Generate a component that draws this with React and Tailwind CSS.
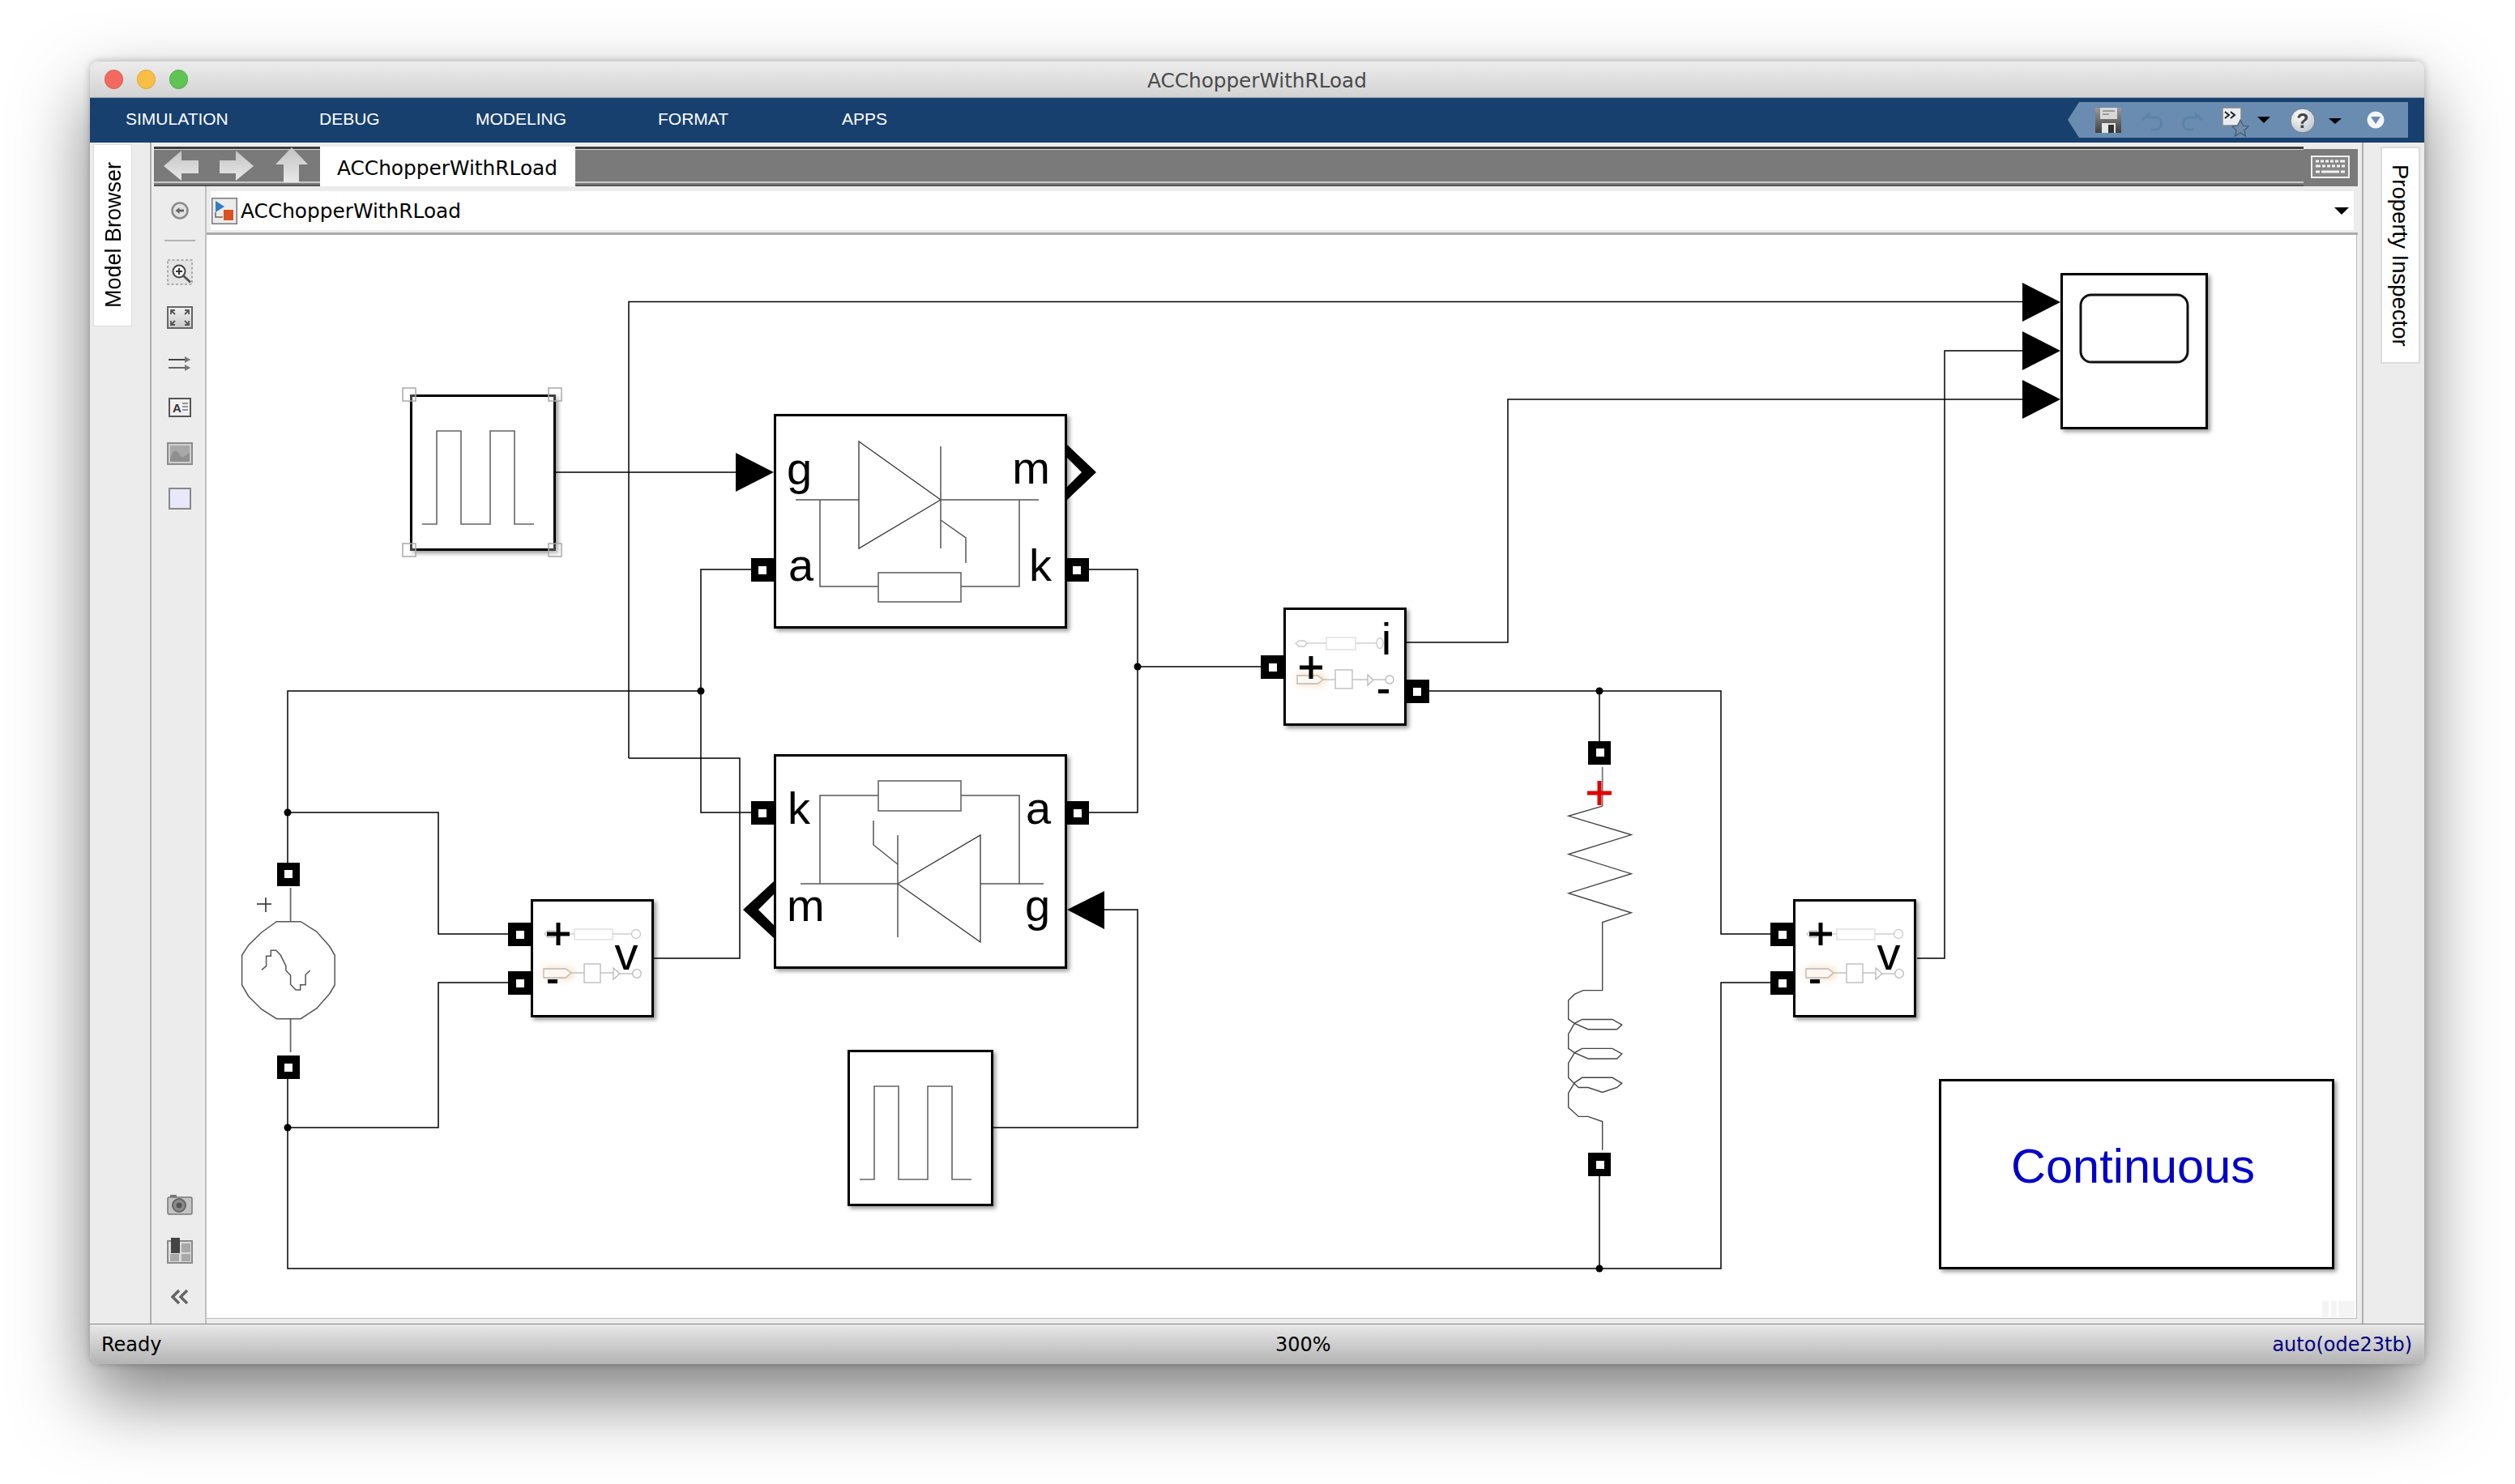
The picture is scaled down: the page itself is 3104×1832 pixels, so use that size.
import React from "react";

const pts = (arr, ox, oy, sx, sy) => arr.map(([x, y]) => `${(ox + x / sx).toFixed(1)},${(oy + y / sy).toFixed(1)}`).join(" ");

const Wire = ({ p }) => <polyline points={p} fill="none" stroke="#000" strokeWidth="1.5" />;
const Ink = ({ p, w = 1.5, c = "#555" }) => <polyline points={p} fill="none" stroke={c} strokeWidth={w} strokeLinejoin="miter" />;
const Dot = ({ x, y }) => <circle cx={x} cy={y} r="4.5" fill="#000" />;
const Port = ({ x, y, wx, wy }) => (
  <g>
    <rect x={x} y={y} width="28" height="29" fill="#000" />
    <rect x={wx} y={wy} width="10" height="10" fill="#fff" />
  </g>
);
const Arrow = ({ tx, y }) => <polygon points={`${tx - 47},${y - 24} ${tx},${y} ${tx - 47},${y + 24}`} fill="#000" />;
const Label = ({ x, y, t, a = "start", s = 56, c = "#000" }) => (
  <text x={x} y={y} textAnchor={a} fontSize={s} fill={c} fontFamily="'Liberation Sans', Arial, sans-serif">{t}</text>
);
const Pulse = ({ dx = 0, dy = 0 }) => (
  <g transform={`translate(${dx} ${dy})`}>
    <Ink p="521,647 539,647 539,532 569,532 569,647 605,647 605,532 635,532 635,647 659,647" w={1.6} c="#666" />
  </g>
);
const Handle = ({ x, y }) => <rect x={x - 8} y={y - 8} width="16" height="16" fill="#fff" fillOpacity="0.25" stroke="#a8a8a8" strokeWidth="1.5" />;
const Plus = ({ x, y, h = 14, c = "#000", t = 5 }) => (
  <g fill={c}>
    <rect x={x - h} y={y - t / 2} width={h * 2} height={t} />
    <rect x={x - t / 2} y={y - h} width={t} height={h * 2} />
  </g>
);
const VInner = () => (
  <g>
    <g fill="none" stroke="#c8c8c8" strokeWidth="1.3">
      <line x1="684" y1="1153" x2="709" y2="1153" />
      <polygon points="672,1153 676,1149 684,1149 684,1157 676,1157" />
      <rect x="709" y="1147" width="47" height="13" stroke="#ddd" />
      <line x1="756" y1="1153" x2="779" y2="1153" />
      <circle cx="785" cy="1153" r="5.5" />
    </g>
    <rect x="670" y="1194" width="38" height="15" rx="6" fill="#f6c493" opacity="0.55" className="blur-[4px]" />
    <g fill="none" stroke="#b8b8b8" strokeWidth="1.3">
      <polygon points="671,1196 698,1196 705,1201 698,1207 671,1207" fill="#fff" fillOpacity="0.7" />
      <line x1="705" y1="1201" x2="721" y2="1201" />
      <rect x="721" y="1190" width="20" height="23" />
      <line x1="741" y1="1201" x2="757" y2="1201" />
      <polygon points="757,1195 765,1202 757,1209" />
      <line x1="765" y1="1202" x2="781" y2="1202" />
      <circle cx="786" cy="1202" r="5.3" />
    </g>
    <Plus x={689} y={1153} />
    <rect x="676" y="1209" width="12" height="5" fill="#000" />
    <Label x={773} y={1197} t="v" a="middle" s={58} />
  </g>
);

const Wires = () => (
  <g>
    <Wire p="776,936 776,372.5 2496,372.5" />
    <Wire p="776,936 913,936 913,1183 807,1183" />
    <Wire p="686,583 908,583" />
    <Wire p="927,703 865,703 865,1003 927,1003" />
    <Wire p="355,1065 355,853 865,853" />
    <Wire p="1344,703 1404,703 1404,1003 1344,1003" />
    <Wire p="1404,823 1556,823" />
    <Wire p="1363,1123 1404,1123 1404,1392 1226,1392" />
    <Wire p="1736,793 1861,793 1861,493 2496,493" />
    <Wire p="2366,1183 2400,1183 2400,433 2496,433" />
    <Wire p="1764,853 2124,853 2124,1153 2186,1153" />
    <Wire p="1974,853 1974,916" />
    <Wire p="1974,1451 1974,1566" />
    <Wire p="2186,1213 2124,1213 2124,1566 355,1566 355,1332" />
    <Wire p="355,1003 541,1003 541,1153 627,1153" />
    <Wire p="355,1392 541,1392 541,1213 627,1213" />
    <Dot x={865} y={853} />
    <Dot x={1404} y={823} />
    <Dot x={355} y={1003} />
    <Dot x={355} y={1392} />
    <Dot x={1974} y={853} />
    <Dot x={1974} y={1566} />
  </g>
);

const Diagram = () => (
  <svg className="absolute inset-0" width="2654" height="1338" viewBox="255 290 2654 1338">
    <Wires />
    <Pulse />
    <Pulse dx={540} dy={809} />
    <Handle x={505} y={487} />
    <Handle x={685} y={487} />
    <Handle x={505} y={679} />
    <Handle x={685} y={679} />

    {/* upper thyristor */}
    <Arrow tx={955} y={583} />
    <polygon points="1316,548 1353,583 1316,618 1316,602 1335,583 1316,564" fill="#000" />
    <Port x={927} y={689} wx={936} wy={699} />
    <Port x={1316} y={689} wx={1324} wy={699} />
    <Label x={971} y={598} t="g" />
    <Label x={1296} y={597} t="m" a="end" />
    <Label x={973} y={717} t="a" />
    <Label x={1270} y={717} t="k" />
    <Ink p="982,617 1060,617" />
    <Ink p="1161,617 1282,617" />
    <Ink p="1012,617 1012,724 1084,724" />
    <Ink p="1186,724 1258,724 1258,617" />
    <rect x="1084" y="707" width="102" height="36" fill="#fff" stroke="#666" strokeWidth="1.6" />
    <Ink p="1161,617 1060,545 1060,677 1161,617" w={1.3} c="#333" />
    <Ink p="1161,551 1161,677" />
    <Ink p="1161,642 1192,664 1192,695" />

    {/* lower thyristor */}
    <polygon points="1317,1123 1363,1100 1363,1147" fill="#000" />
    <polygon points="955,1088 917,1123 955,1158 955,1142 936,1123 955,1104" fill="#000" />
    <Port x={927} y={989} wx={936} wy={999} />
    <Port x={1316} y={989} wx={1325} wy={999} />
    <Label x={972} y={1017} t="k" />
    <Label x={1266} y={1017} t="a" />
    <Label x={971} y={1137} t="m" />
    <Label x={1265} y={1137} t="g" />
    <Ink p="1084,982 1012,982 1012,1091" />
    <Ink p="1186,982 1258,982 1258,1091" />
    <Ink p="988,1091 1108,1091" />
    <Ink p="1210,1091 1288,1091" />
    <rect x="1084" y="964" width="102" height="37" fill="#fff" stroke="#666" strokeWidth="1.6" />
    <Ink p="1108,1091 1210,1031 1210,1163 1108,1091" w={1.3} c="#333" />
    <Ink p="1108,1031 1108,1157" />
    <Ink p="1078,1013 1078,1043 1108,1067" />

    {/* AC source */}
    <Port x={342} y={1065} wx={351} wy={1074} />
    <Port x={342} y={1303} wx={351} wy={1313} />
    <Ink p="358.6,1096 358.6,1137" w={1.8} c="#666" />
    <Ink p="358.6,1258 358.6,1299" w={1.8} c="#666" />
    <polygon
      points={pts([[172, 293], [255, 293], [310, 330], [355, 385], [373, 418], [373, 528], [355, 560], [310, 615], [255, 653], [172, 653], [120, 618], [75, 570], [52, 528], [52, 418], [75, 380], [120, 333]], 280, 1040, 2.8, 3)}
      fill="none" stroke="#555" strokeWidth="1.5"
    />
    <Ink p={pts([[120, 472], [136, 458], [136, 421], [152, 421], [152, 400], [170, 400], [186, 418], [204, 458], [204, 474], [220, 492], [220, 526], [238, 546], [254, 546], [254, 527], [272, 527], [272, 490], [288, 474]], 280, 1040, 2.8, 3)} />
    <Ink p="317,1116 335,1116" c="#333" w={1.6} />
    <Ink p="328,1108 328,1126" c="#333" w={1.6} />

    {/* voltage measurements */}
    <Port x={627} y={1139} wx={637} wy={1149} />
    <Port x={627} y={1199} wx={637} wy={1209} />
    <VInner />
    <Port x={2185} y={1139} wx={2195} wy={1149} />
    <Port x={2185} y={1199} wx={2195} wy={1209} />
    <g transform="translate(1558 0)">
      <VInner />
    </g>

    {/* current measurement */}
    <Port x={1556} y={809} wx={1566} wy={819} />
    <Port x={1736} y={839} wx={1744} wy={849} />
    <g fill="none" stroke="#c8c8c8" strokeWidth="1.3">
      <polygon points="1599,794 1603,791 1610,791 1613,794 1610,798 1603,798" />
      <line x1="1613" y1="794" x2="1637" y2="794" />
      <rect x="1637" y="787" width="36" height="15" stroke="#ddd" />
      <line x1="1673" y1="794" x2="1699" y2="794" />
      <ellipse cx="1703" cy="794" rx="4" ry="6.5" />
    </g>
    <rect x="1600" y="832" width="36" height="14" rx="6" fill="#f6c493" opacity="0.55" className="blur-[4px]" />
    <g fill="none" stroke="#b8b8b8" strokeWidth="1.3">
      <polygon points="1601,834 1626,834 1633,839 1626,844 1601,844" fill="#fff" fillOpacity="0.7" />
      <line x1="1633" y1="839" x2="1648" y2="839" />
      <rect x="1648" y="827" width="21" height="23" />
      <line x1="1669" y1="839" x2="1688" y2="839" />
      <polygon points="1688,833 1695,839.5 1688,846" />
      <line x1="1695" y1="839" x2="1710" y2="839" />
      <circle cx="1715" cy="839" r="5" />
    </g>
    <Plus x={1618} y={824} />
    <rect x="1701" y="851" width="13" height="5" fill="#000" />
    <Label x={1711} y={808} t="i" a="middle" />

    {/* RL load */}
    <Port x={1960} y={915} wx={1970} wy={924} />
    <Port x={1960} y={1423} wx={1970} wy={1433} />
    <Ink p="1977.7,947 1977.7,995" w={1.8} c="#777" />
    <Ink
      p={pts([[293, 257], [168, 290], [400, 353], [168, 418], [400, 483], [168, 548], [400, 613], [293, 645], [293, 872], [222, 872], [190, 885], [167, 905], [167, 968], [190, 982], [240, 1002], [347, 1002], [365, 987], [330, 969], [218, 969], [190, 982], [167, 1018], [167, 1066], [190, 1080], [240, 1100], [347, 1100], [365, 1084], [330, 1066], [218, 1066], [190, 1080], [167, 1115], [167, 1163], [185, 1180], [205, 1196], [240, 1196], [293, 1212], [347, 1196], [365, 1182], [330, 1163], [218, 1163], [190, 1180], [167, 1215], [167, 1262], [205, 1293], [240, 1293], [293, 1310], [293, 1405]], 1880, 900, 3, 2.703)}
      w={1.4}
      c="#444"
    />
    <Plus x={1974} y={979} h={15} c="#e00000" t={5} />

    {/* scope */}
    <Arrow tx={2543} y={373} />
    <Arrow tx={2543} y={433} />
    <Arrow tx={2543} y={493} />
    <rect x="2568" y="364" width="132" height="83" rx="13" fill="none" stroke="#111" strokeWidth="3" />

    <g fill="#f4f4f4">
      <rect x="2866" y="1606" width="8" height="20" />
      <rect x="2877" y="1606" width="7" height="20" />
      <rect x="2886" y="1606" width="20" height="20" />
    </g>
  </svg>
);

const Block = ({ className }) => (
  <div className={`absolute bg-white border-[3px] border-black shadow-[3px_3px_5px_rgba(0,0,0,0.4)] ${className}`} />
);

const ToolIcon = ({ w = 32, h, className = "", children }) => (
  <svg width={w} height={h} viewBox={`0 0 ${w} ${h}`} className={`block shrink-0 ${className}`}>{children}</svg>
);

const ToolColumn = () => (
  <div className="w-[68px] shrink-0 flex flex-col items-center pl-[3px] border-r-2 border-[#c0c0c0] bg-[#ececec]">
    <ToolIcon w={22} h={22} className="mt-[19px]">
      <circle cx="11" cy="11" r="9.5" fill="#e2e2e2" stroke="#8a8a8a" strokeWidth="2.5" />
      <path d="M5.5 11 L10.5 7 V9.5 H16 V12.5 H10.5 V15 Z" fill="#666" />
    </ToolIcon>
    <div className="mt-[25px] w-[38px] h-[2px] bg-[#b4b4b4]" />
    <ToolIcon h={32} className="mt-[22px]">
      <rect x="1" y="1" width="30" height="30" fill="#e4e4e4" stroke="#999" strokeWidth="1.5" strokeDasharray="3 2.5" />
      <circle cx="15" cy="15" r="7.5" fill="#f6f6f6" stroke="#444" strokeWidth="2" />
      <path d="M11 15h8M15 11v8" stroke="#333" strokeWidth="2" />
      <path d="M20.5 20.5 L29 28.5" stroke="#555" strokeWidth="3" />
    </ToolIcon>
    <ToolIcon h={28} className="mt-[26px]">
      <defs>
        <linearGradient id="fitg" x1="0" y1="0" x2="0" y2="1"><stop offset="0" stopColor="#f2f2f2" /><stop offset="1" stopColor="#c8c8c8" /></linearGradient>
      </defs>
      <rect x="1" y="1" width="30" height="26" fill="url(#fitg)" stroke="#666" strokeWidth="2" />
      <path d="M5 10V5h5M5 5l5 5M27 10V5h-5M27 5l-5 5M5 18v5h5M5 23l5-5M27 18v5h-5M27 23l-5-5" fill="none" stroke="#555" strokeWidth="1.8" />
    </ToolIcon>
    <ToolIcon w={30} h={18} className="mt-[34px]">
      <path d="M1 4h26" stroke="#444" strokeWidth="2" />
      <path d="M1 14h26" stroke="#666" strokeWidth="2" />
      <path d="M21 0l7 4-7 4zM21 10l7 4-7 4z" fill="#777" />
    </ToolIcon>
    <ToolIcon w={28} h={24} className="mt-[33px]">
      <rect x="1" y="1" width="26" height="22" fill="#f0f0f0" stroke="#555" strokeWidth="2" />
      <text x="5" y="18" fontSize="15" fontWeight="700" fill="#333" fontFamily="'Liberation Sans', sans-serif">A</text>
      <path d="M17 7h7M17 11h7M17 15h7" stroke="#777" strokeWidth="1.5" />
    </ToolIcon>
    <ToolIcon h={28} className="mt-[31px]">
      <rect x="1" y="1" width="30" height="26" fill="#cfcfcf" stroke="#8c8c8c" strokeWidth="2" />
      <rect x="4" y="4" width="24" height="20" fill="#a8a8a8" />
      <path d="M4 20 C8 8 12 8 16 16 C19 21 23 16 28 13 V24 H4Z" fill="#8f8f8f" />
    </ToolIcon>
    <ToolIcon w={28} h={27} className="mt-[28px]">
      <rect x="1" y="1" width="26" height="25" fill="#e8e8f8" stroke="#888" strokeWidth="2" />
    </ToolIcon>
    <ToolIcon h={25} className="mt-auto">
      <rect x="4" y="0" width="8" height="4" fill="#777" />
      <rect x="1" y="3" width="30" height="21" rx="2" fill="#c4c4c4" stroke="#777" strokeWidth="1.5" />
      <circle cx="15" cy="13" r="8" fill="#8a8a8a" stroke="#666" strokeWidth="2" />
      <circle cx="15" cy="13" r="3.5" fill="#555" />
    </ToolIcon>
    <ToolIcon h={32} className="mt-[28px]">
      <rect x="1" y="4" width="30" height="27" fill="#dcdcdc" stroke="#8a8a8a" strokeWidth="2" />
      <rect x="18" y="7" width="11" height="11" fill="#a8a8a8" />
      <rect x="18" y="20" width="11" height="9" fill="#a8a8a8" />
      <rect x="4" y="20" width="11" height="9" fill="#a8a8a8" />
      <rect x="5" y="0" width="11" height="19" fill="#444" />
    </ToolIcon>
    <ToolIcon w={22} h={18} className="mt-[32px] mb-[24px]">
      <path d="M10 1 L2 9 L10 17 M20 1 L12 9 L20 17" fill="none" stroke="#666" strokeWidth="3.5" />
    </ToolIcon>
  </div>
);

const QuickBar = () => (
  <svg width="420" height="44" viewBox="2552 126 420 44" className="block ml-auto mr-[20px] -mt-[1px]">
    <defs>
      <linearGradient id="disk" x1="0" y1="0" x2="0" y2="1"><stop offset="0" stopColor="#9a9a9a" /><stop offset="1" stopColor="#3e3e3e" /></linearGradient>
      <radialGradient id="help" cx="0.4" cy="0.3" r="0.8"><stop offset="0" stopColor="#ffffff" /><stop offset="1" stopColor="#b7c0c9" /></radialGradient>
    </defs>
    <polygon points="2552,148 2566,126 2972,126 2972,170 2566,170" fill="#6a8cb0" />
    <path d="M2586 133 h32 v31 h-32 v-26z" fill="url(#disk)" />
    <rect x="2592" y="133" width="21" height="14" fill="#d8d8d8" />
    <path d="M2595 137h15M2595 141h8" stroke="#888" strokeWidth="1.5" />
    <rect x="2594" y="152" width="17" height="12" fill="#e6e6e6" />
    <rect x="2602" y="154" width="7" height="10" fill="#333" />
    <path d="M2644 148 l8 -7 v4 h8 c10 0 10 15 0 15 h-5" fill="none" stroke="#5b83aa" strokeWidth="3" />
    <path d="M2718 148 l-8 -7 v4 h-8 c-10 0 -10 15 0 15 h5" fill="none" stroke="#5b83aa" strokeWidth="3" />
    <rect x="2743" y="133" width="23" height="22" fill="#e9edf1" stroke="#888" strokeWidth="1.5" />
    <path d="M2746 138l5 4-5 4M2753 138l5 4-5 4" fill="none" stroke="#222" strokeWidth="2" />
    <polygon points="2765,148 2768.5,155 2775,156 2770,161 2771.5,168 2765,164 2758.5,168 2760,161 2755,156 2761.5,155" fill="#6f8cab" stroke="#46586b" strokeWidth="1.2" />
    <polygon points="2786,144 2802,144 2794,152" fill="#000" />
    <circle cx="2842" cy="149" r="15" fill="url(#help)" stroke="#6a7683" strokeWidth="1" />
    <text x="2842" y="158" textAnchor="middle" fontSize="25" fontWeight="700" fill="#444" fontFamily="'Liberation Sans', sans-serif">?</text>
    <polygon points="2874,146 2890,146 2882,153" fill="#000" />
    <circle cx="2932" cy="148" r="10.5" fill="#f3f5f7" />
    <polygon points="2926,144 2938,144 2932,153" fill="#6a8cb0" />
  </svg>
);

export default function App() {
  const dejavu = "font-['DejaVu_Sans',sans-serif]";
  const lib = "font-['Liberation_Sans',Arial,sans-serif]";
  return (
    <div className="w-[3104px] h-[1832px] bg-white pl-[111px] pt-[75px] overflow-hidden">
      <div className={`w-[2881px] h-[1609px] flex flex-col rounded-[12px] overflow-hidden shadow-[0_42px_90px_rgba(0,0,0,0.5),0_0_8px_rgba(0,0,0,0.25)] ${dejavu}`}>
        {/* title bar */}
        <div className="h-[45px] shrink-0 relative flex items-center justify-center bg-gradient-to-b from-[#ececec] to-[#d3d3d3] border-t border-[#d0d0d0]">
          <div className="absolute left-[18px] top-[10px] flex gap-[17px]">
            <div className="w-[23px] h-[24px] rounded-full bg-[#f3695f] border border-[#dc5b50]" />
            <div className="w-[23px] h-[24px] rounded-full bg-[#f8bf45] border border-[#dba53a]" />
            <div className="w-[23px] h-[24px] rounded-full bg-[#5fc454] border border-[#4fab45]" />
          </div>
          <span className="text-[24.7px] text-[#4a4a4a] leading-none pt-[4px]">ACChopperWithRLoad</span>
        </div>

        {/* blue bar */}
        <div className={`h-[56px] shrink-0 flex items-center bg-[#17406f] pl-[44px] text-white text-[21px] ${lib} border-t border-[#8a9bb0]`}>
          <span className="w-[239px] -mt-[3px]">SIMULATION</span>
          <span className="w-[193px] -mt-[3px]">DEBUG</span>
          <span className="w-[225px] -mt-[3px]">MODELING</span>
          <span className="w-[227px] -mt-[3px]">FORMAT</span>
          <span className="-mt-[3px]">APPS</span>
          <QuickBar />
        </div>

        {/* main */}
        <div className="flex-1 min-h-0 flex bg-[#ececec]">
          {/* left dock */}
          <div className="w-[76px] shrink-0 pl-[4px] pt-[2px] border-r-2 border-[#b0b0b0]">
            <div className={`w-[48px] h-[225px] bg-white border border-[#dcdcdc] flex items-center justify-center pl-[2px] ${lib}`}>
              <span className="[writing-mode:vertical-rl] rotate-180 text-[27px] leading-none text-black">Model Browser</span>
            </div>
          </div>

          {/* center */}
          <div className="flex-1 min-w-0 flex flex-col pt-[5px]">
            <div className="h-[49px] shrink-0 ml-[3px] mr-[5px] flex bg-[#7a7a7a]">
              <div className="w-[205px] shrink-0 relative border-t-[3px] border-b-[2px] border-t-[#3c3c3c] border-b-[#555]">
                <div className="h-[1px] bg-[#d8d8d8]" />
                <div className="absolute left-0 right-0 bottom-[2px] h-[2px] bg-[#c8c8c8]" />
                <svg width="205" height="49" viewBox="190 181 205 49" className="absolute left-0 top-[-3px]">
                  <defs>
                    <linearGradient id="arr" x1="0" y1="0" x2="0" y2="1"><stop offset="0" stopColor="#c4c4c4" /><stop offset="1" stopColor="#e8e8e8" /></linearGradient>
                  </defs>
                  <polygon points="202,205 224,186 224,198 245,198 245,214 224,214 224,223" fill="url(#arr)" />
                  <polygon points="313,205 291,186 291,198 271,198 271,214 291,214 291,223" fill="url(#arr)" />
                  <polygon points="360,182 380,203 369,203 369,225 350,225 350,203 340,203" fill="url(#arr)" />
                </svg>
              </div>
              <div className="w-[315px] shrink-0 bg-white flex items-center pl-[21px] pt-[6px] text-[24.8px] text-black leading-none">ACChopperWithRLoad</div>
              <div className="flex-1 relative border-t-[3px] border-b-[2px] border-t-[#3c3c3c] border-b-[#555]">
                <div className="h-[1px] bg-[#d8d8d8]" />
                <div className="absolute left-0 right-0 bottom-[2px] h-[2px] bg-[#c8c8c8]" />
              </div>
              <div className="w-[67px] shrink-0 flex flex-col bg-[#7a7a7a]">
                <div className="h-[3px] bg-[#ececec]" />
                <div className="flex-1 flex items-center">
                  <svg width="48" height="28" viewBox="0 0 48 28" className="block ml-[9px] mb-[3px]">
                    <rect x="1" y="1" width="46" height="26" fill="#888" stroke="#f0f0f0" strokeWidth="2" />
                    <path d="M6 7h4M12 7h4M18 7h4M24 7h4M30 7h4M36 7h6M6 13h6M14 13h4M20 13h4M26 13h4M32 13h4M38 13h4M6 20h5M13 20h22M37 20h5" stroke="#f2f2f2" strokeWidth="3" />
                  </svg>
                </div>
              </div>
            </div>

            <div className="flex-1 min-h-0 flex">
              <ToolColumn />
              <div className="w-[2655px] shrink-0 flex flex-col">
                <div className="h-[60px] shrink-0 pt-[6px] pl-[5px] pr-[5px] border-b-[3px] border-[#ababab]">
                  <div className="h-[48px] bg-white flex items-center pl-[1px] pr-[6px] text-[24.8px] text-black leading-none">
                    <svg width="32" height="33" viewBox="0 0 32 33" className="block shrink-0">
                      <rect x="0.75" y="0.75" width="30.5" height="31.5" fill="#ececec" stroke="#777" strokeWidth="1.5" />
                      <polygon points="5,4 16,11 5,18" fill="#2f7fc4" />
                      <path d="M5 18v6h9" stroke="#666" strokeWidth="1.5" fill="none" />
                      <rect x="15" y="15" width="12" height="13" fill="#d9531e" />
                    </svg>
                    <span className="ml-[4px] pt-[3px]">ACChopperWithRLoad</span>
                    <svg width="18" height="9" viewBox="0 0 18 9" className="block ml-auto"><polygon points="0,0 18,0 9,9" fill="#000" /></svg>
                  </div>
                </div>
                <div className="relative w-[2654px] h-[1338px] bg-white border-r border-b border-[#bbb] overflow-hidden">
                  <Block className="left-[251px] top-[197px] w-[180px] h-[193px]" />
                  <Block className="left-[791px] top-[1006px] w-[180px] h-[193px]" />
                  <Block className="left-[700px] top-[221px] w-[362px] h-[265px]" />
                  <Block className="left-[700px] top-[641px] w-[362px] h-[265px]" />
                  <Block className="left-[1329px] top-[460px] w-[152px] h-[146px]" />
                  <Block className="left-[400px] top-[820px] w-[152px] h-[146px]" />
                  <Block className="left-[1958px] top-[820px] w-[152px] h-[146px]" />
                  <Block className="left-[2288px] top-[47px] w-[182px] h-[193px]" />
                  <Diagram />
                  <div className={`absolute left-[2138px] top-[1042px] w-[488px] h-[235px] bg-white border-[3px] border-black shadow-[3px_3px_5px_rgba(0,0,0,0.4)] flex items-center justify-center pr-[9px] pb-[20px] text-[59.5px] leading-none text-[#0000c8] ${lib}`}>
                    Continuous
                  </div>
                </div>
              </div>
            </div>
          </div>

          {/* right dock */}
          <div className="w-[77px] shrink-0 border-l-2 border-[#b0b0b0] pl-[21px] pt-[5px]">
            <div className={`w-[49px] h-[268px] bg-white border-2 border-[#dcdcdc] flex items-center justify-center ${lib}`}>
              <span className="[writing-mode:vertical-rl] text-[27.5px] leading-none text-black">Property Inspector</span>
            </div>
          </div>
        </div>

        {/* status bar */}
        <div className="h-[50px] shrink-0 flex items-center pl-[14px] pr-[15px] text-[24px] leading-none text-black bg-gradient-to-b from-[#e8e8e8] to-[#b4b4b4] border-t border-[#868686]">
          <span className="w-[1449px]">Ready</span>
          <span>300%</span>
          <span className="ml-auto text-[#000080]">auto(ode23tb)</span>
        </div>
      </div>
    </div>
  );
}
